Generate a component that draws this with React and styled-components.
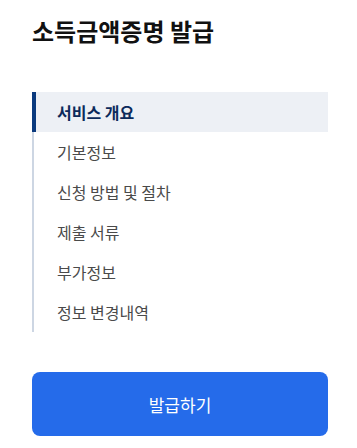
import React from "react";
import styled, { createGlobalStyle } from "styled-components";

const Global = createGlobalStyle`
  html, body { margin: 0; padding: 0; background: #ffffff; }
  body { font-family: "Noto Sans CJK KR", "Noto Sans", sans-serif; }
  * { box-sizing: border-box; }
`;

const Page = styled.div`
  width: 357px;
  padding: 14px 29px 0 32px;
  display: flex;
  flex-direction: column;
`;

const Title = styled.h1`
  margin: 0;
  font-size: 24px;
  line-height: 34px;
  font-weight: 700;
  color: #111111;
`;

const Nav = styled.ul`
  list-style: none;
  margin: 44px 0 0 0;
  padding: 0;
  border-left: 2px solid #cdd6e3;
  display: flex;
  flex-direction: column;
`;

const Item = styled.li`
  height: 40px;
  display: flex;
  align-items: center;
  margin-left: -2px;
  padding-left: 21px;
  font-size: 16px;
  color: ${(p) => (p.$active ? "#0b2a5b" : "#4a4a4a")};
  font-weight: ${(p) => (p.$active ? 700 : 400)};
  background: ${(p) => (p.$active ? "#edf0f5" : "transparent")};
  border-left: 4px solid ${(p) => (p.$active ? "#0b3a7e" : "transparent")};
`;

const Button = styled.button`
  margin-top: 40px;
  height: 64px;
  width: 100%;
  border: none;
  border-radius: 8px;
  background: #256bea;
  color: #ffffff;
  font-family: inherit;
  font-size: 17px;
  font-weight: 400;
`;

const items = ["서비스 개요", "기본정보", "신청 방법 및 절차", "제출 서류", "부가정보", "정보 변경내역"];

export default function App() {
  return (
    <>
      <Global />
      <Page>
        <Title>소득금액증명 발급</Title>
        <Nav>
          {items.map((t, i) => (
            <Item key={t} $active={i === 0}>{t}</Item>
          ))}
        </Nav>
        <Button>발급하기</Button>
      </Page>
    </>
  );
}
